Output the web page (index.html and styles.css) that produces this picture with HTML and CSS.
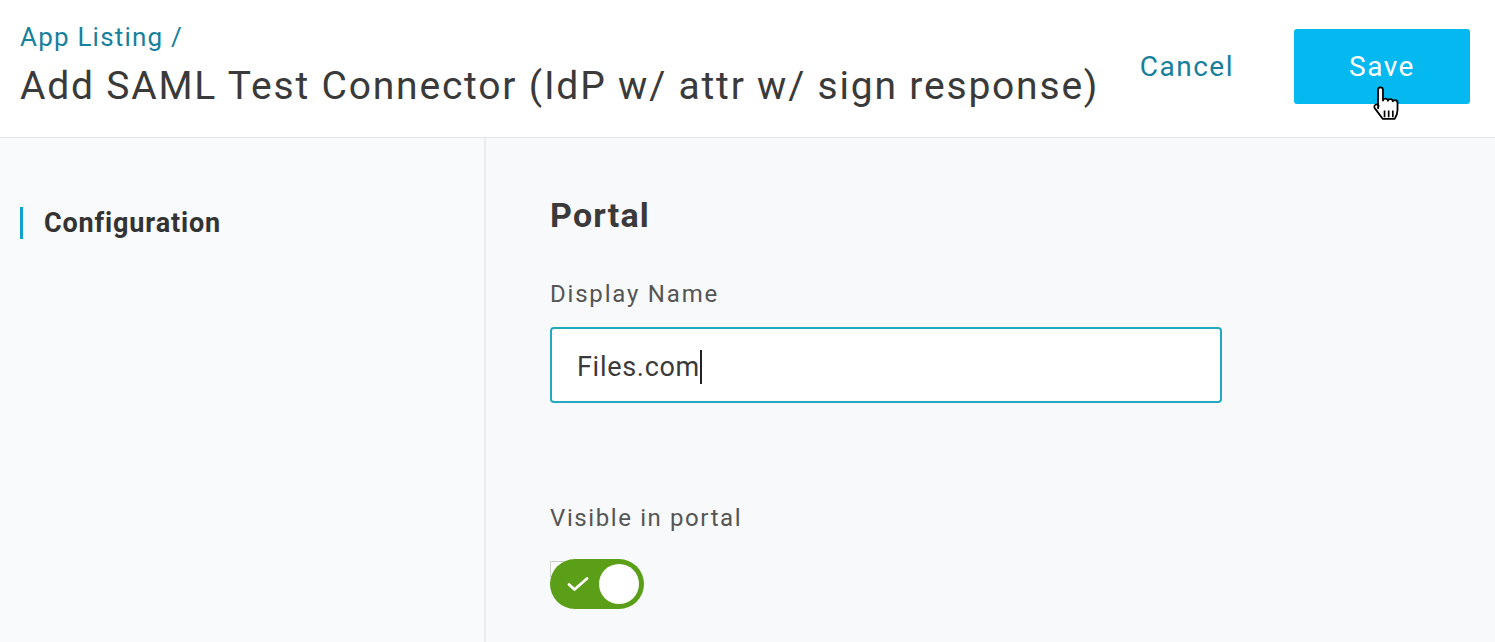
FILE: index.html
```html
<!DOCTYPE html>
<html>
<head>
<meta charset="utf-8">
<link rel="stylesheet" href="styles.css">
</head>
<body>
<header class="header">
  <div class="titles">
    <a class="crumb">App Listing /</a>
    <h1 class="title">Add SAML Test Connector (IdP w/ attr w/ sign response)</h1>
  </div>
  <div class="actions">
    <button class="cancel">Cancel</button>
    <button class="save">Save
      <svg class="cursor" width="34" height="38" viewBox="0 0 30 34">
        <path d="M7 3.5c0-1.4 1-2.3 2.2-2.3s2.2.9 2.2 2.3v9.5c.3-1.1 1.2-1.7 2.2-1.7 1.2 0 2.1.8 2.2 2 .3-1 1.2-1.5 2.2-1.5 1.2 0 2.1.8 2.2 2 .4-.8 1.2-1.2 2-1.2 1.3 0 2.2 1 2.2 2.3v6.6c0 3.8-1.1 6-2.6 8H11.3c-1.9-2.5-4.5-6-7.1-9.4-.9-1.2-.7-2.5.3-3.2 1-.7 2.200-.4 3 .6L7 20V3.5z" fill="#fff" stroke="#000" stroke-width="1.6" stroke-linejoin="round"/>
        <path d="M12.8 22v6M16.5 22v6M20.2 22v6" stroke="#000" stroke-width="1.5"/>
      </svg>
    </button>
  </div>
</header>
<div class="body">
  <aside class="sidebar">
    <div class="nav-item">Configuration</div>
  </aside>
  <main class="main">
    <h2 class="section">Portal</h2>
    <label class="label">Display Name</label>
    <div class="input"><span>Files.com</span><span class="caret"></span></div>
    <label class="label label-visible">Visible in portal</label>
    <div class="toggle-wrap">
      <span class="checkbox"></span>
      <div class="toggle">
        <svg class="check" width="24" height="18" viewBox="0 0 24 18"><path d="M3 9.5l5.5 5L21 3.5" fill="none" stroke="#fff" stroke-width="2.8" stroke-linecap="round" stroke-linejoin="round"/></svg>
        <span class="knob"></span>
      </div>
    </div>
  </main>
</div>
</body>
</html>
```
FILE: styles.css
```css
* { box-sizing: border-box; }
html, body { margin: 0; padding: 0; }
body {
  font-family: Roboto, "Liberation Sans", sans-serif;
  background: #f8f9fa;
  width: 1495px;
  height: 642px;
  overflow: hidden;
}
.header {
  height: 138px;
  background: #fff;
  border-bottom: 1px solid #e3e5e6;
  display: flex;
  justify-content: space-between;
  align-items: flex-start;
  padding: 0 25px 0 20px;
}
.titles { display: flex; flex-direction: column; padding-top: 20px; }
.crumb {
  color: #17809c;
  font-size: 26px;
  line-height: 34px;
  letter-spacing: 1.2px;
}
.title {
  margin: 0;
  margin-top: 7px;
  font-weight: 400;
  color: #3a3a3a;
  font-size: 39px;
  line-height: 50px;
  letter-spacing: 1.8px;
}
.actions { display: flex; align-items: center; padding-top: 29px; }
.cancel {
  border: 0; background: none;
  font-family: inherit;
  color: #17809c;
  font-size: 28px;
  letter-spacing: 1.5px;
  padding: 0;
  margin-right: 60px;
}
.save {
  position: relative;
  width: 176px;
  height: 75px;
  border: 0;
  border-radius: 3px;
  background: #04b9f0;
  color: #fff;
  font-family: inherit;
  font-size: 28px;
  letter-spacing: 1.5px;
}
.cursor { position: absolute; left: 76px; top: 57px; }
.body { display: flex; height: 504px; }
.sidebar {
  width: 486px;
  background: #f9fafb;
  border-right: 2px solid #ebeced;
  padding-top: 69px;
}
.nav-item {
  margin-left: 20px;
  border-left: 3px solid #14a0cf;
  padding-left: 21px;
  font-size: 27px;
  font-weight: 700;
  color: #333;
  line-height: 32px;
  letter-spacing: 0.85px;
}
.main { flex: 1; padding: 57px 0 0 64px; display: flex; flex-direction: column; align-items: flex-start; }
.section {
  margin: 0;
  font-size: 34px;
  font-weight: 700;
  color: #3a3a3a;
  line-height: 40px;
  letter-spacing: 1.2px;
}
.label {
  margin-top: 44px;
  font-size: 24px;
  color: #555;
  letter-spacing: 1.8px;
  line-height: 30px;
}
.input {
  margin-top: 18px;
  width: 672px;
  height: 76px;
  border: 2px solid #23a8bf;
  border-radius: 4px;
  background: #fff;
  display: flex;
  align-items: center;
  padding-left: 25px;
  padding-top: 4px;
  font-size: 27px;
  color: #3a3a3a;
  letter-spacing: 0.7px;
}
.caret { width: 2px; height: 34px; background: #222; margin-left: 0; }
.label-visible { margin-top: 100px; letter-spacing: 1.6px; }
.toggle-wrap { position: relative; margin-top: 26px; }
.checkbox {
  position: absolute; left: 0; top: 2px;
  width: 16px; height: 16px;
  border: 1px solid #ccc;
  background: #fff;
}
.toggle {
  position: relative;
  width: 94px;
  height: 50px;
  border-radius: 25px;
  background: #5b9f18;
  display: flex;
  align-items: center;
  justify-content: space-between;
  padding: 0 5px 0 16px;
}
.knob { width: 40px; height: 40px; border-radius: 50%; background: #fff; }
```
